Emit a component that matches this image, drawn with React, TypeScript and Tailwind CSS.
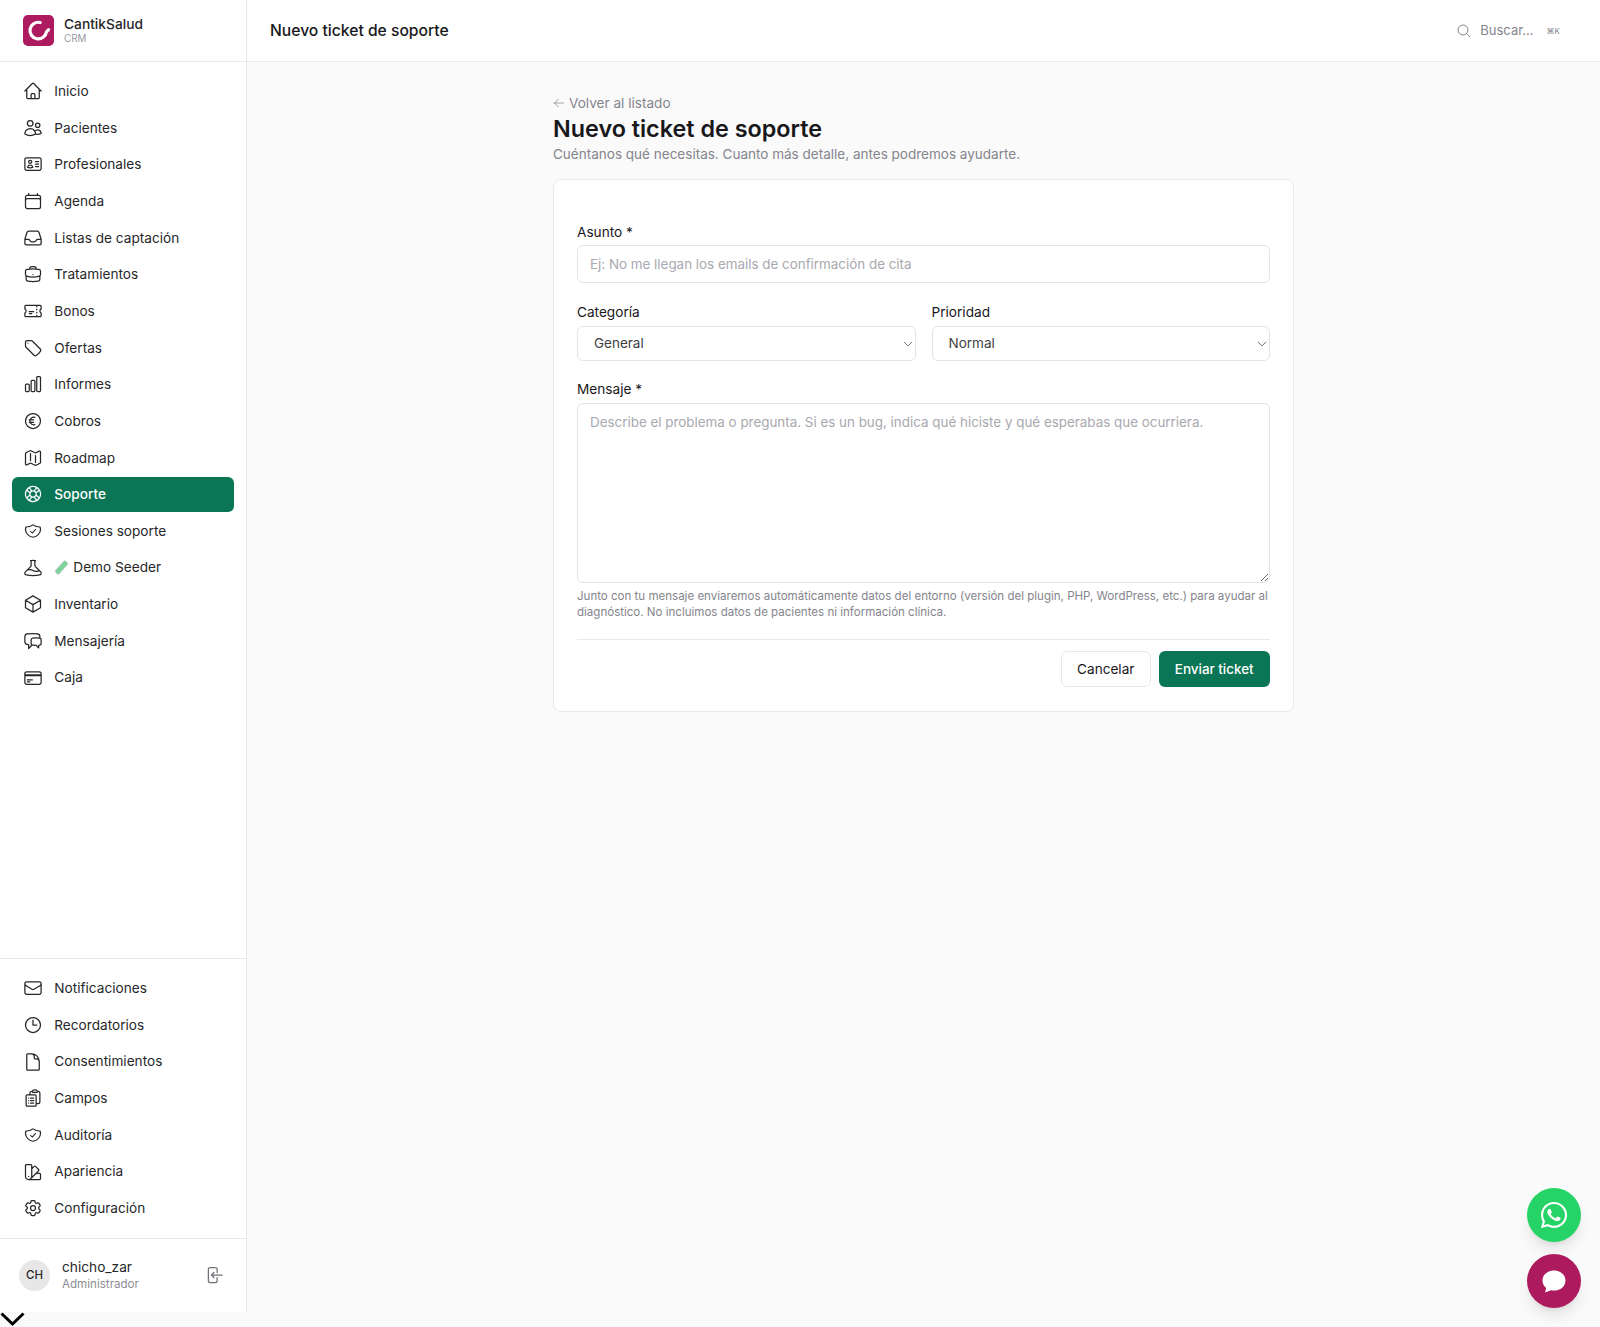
import React from "react";
import {
  HiOutlineHome, HiOutlineUsers, HiOutlineIdentification, HiOutlineCalendar, HiOutlineInbox,
  HiOutlineBriefcase, HiOutlineTicket, HiOutlineTag, HiOutlineChartBar, HiOutlineCurrencyEuro,
  HiOutlineMap, HiOutlineLifebuoy, HiOutlineShieldCheck, HiOutlineBeaker, HiOutlineCube,
  HiOutlineChatBubbleLeftRight, HiOutlineCreditCard, HiOutlineEnvelope, HiOutlineClock,
  HiOutlineDocument, HiOutlineClipboardDocumentList, HiOutlineSwatch, HiOutlineCog6Tooth,
  HiOutlineArrowLeftEndOnRectangle, HiOutlineMagnifyingGlass, HiOutlineArrowLeft, HiOutlineChevronDown,
} from "react-icons/hi2";
import { FaWhatsapp } from "react-icons/fa";

function TestTube() {
  return (
    <svg width="15" height="15" viewBox="0 0 15 15" className="mr-[4px]">
      <rect x="5" y="0" width="5" height="15" rx="1.6" transform="rotate(42 7.5 7.5)" fill="#7ed39c" stroke="#b9c6c0" strokeWidth="0.7" />
    </svg>
  );
}

const topNav: [any, string][] = [
  [HiOutlineHome, "Inicio"],
  [HiOutlineUsers, "Pacientes"],
  [HiOutlineIdentification, "Profesionales"],
  [HiOutlineCalendar, "Agenda"],
  [HiOutlineInbox, "Listas de captación"],
  [HiOutlineBriefcase, "Tratamientos"],
  [HiOutlineTicket, "Bonos"],
  [HiOutlineTag, "Ofertas"],
  [HiOutlineChartBar, "Informes"],
  [HiOutlineCurrencyEuro, "Cobros"],
  [HiOutlineMap, "Roadmap"],
  [HiOutlineLifebuoy, "Soporte"],
  [HiOutlineShieldCheck, "Sesiones soporte"],
  [HiOutlineBeaker, "Demo Seeder"],
  [HiOutlineCube, "Inventario"],
  [HiOutlineChatBubbleLeftRight, "Mensajería"],
  [HiOutlineCreditCard, "Caja"],
];

const bottomNav: [any, string][] = [
  [HiOutlineEnvelope, "Notificaciones"],
  [HiOutlineClock, "Recordatorios"],
  [HiOutlineDocument, "Consentimientos"],
  [HiOutlineClipboardDocumentList, "Campos"],
  [HiOutlineShieldCheck, "Auditoría"],
  [HiOutlineSwatch, "Apariencia"],
  [HiOutlineCog6Tooth, "Configuración"],
];

function NavItem({ icon: Icon, label }: { icon: any; label: string }) {
  const active = label === "Soporte";
  const squashed = Icon === HiOutlineShieldCheck;
  return (
    <a
      className={
        active
          ? "flex h-[34.33px] items-center gap-[11.3px] rounded-[6px] bg-[#0b7655] pl-[11px] text-[13.64px] font-medium text-white"
          : "flex h-[34.33px] items-center gap-[11.3px] rounded-[6px] pl-[11px] text-[13.64px] text-[#27272a]"
      }
    >
      {squashed ? (
        <Icon preserveAspectRatio="none" className="h-[16px] w-[20px] shrink-0" />
      ) : (
        <Icon className="h-[20px] w-[20px] shrink-0" />
      )}
      <span className="flex items-center">
        {label === "Demo Seeder" && <TestTube />}
        {label}
      </span>
    </a>
  );
}

function Field({ label, tight, children }: { label: string; tight?: boolean; children: React.ReactNode }) {
  return (
    <label className="block">
      <span className={tight ? "mb-[3px] block text-[13.63px] leading-[20px] text-[#18181b]" : "mb-[4px] block text-[13.63px] leading-[20px] text-[#18181b]"}>{label}</span>
      {children}
    </label>
  );
}

function SelectBox({ value }: { value: string }) {
  return (
    <div className="relative">
      <select
        defaultValue={value}
        className="h-[35.5px] w-full appearance-none rounded-[6px] border border-[#e4e4e7] bg-white pl-[16px] text-[13.5px] text-[#3f3f46] outline-none"
      >
        <option>{value}</option>
      </select>
      <HiOutlineChevronDown className="pointer-events-none absolute right-[2px] top-[12px] h-[12px] w-[12px] text-[#3f3f46]" />
    </div>
  );
}

export default function App() {
  return (
    <div className="relative h-[1327px] w-[1600px] overflow-hidden bg-[#fafafa] font-['Inter',sans-serif] text-[#18181b]">
      <div className="flex h-[1312px]">
        <aside className="flex w-[247px] shrink-0 flex-col border-r border-[#e9e9eb] bg-white">
          <div className="flex h-[62px] shrink-0 items-center gap-[10px] border-b border-[#e9e9eb] pl-[23px]">
            <svg width="31" height="31" viewBox="0 0 31 31">
              <rect width="31" height="31" rx="5" fill="#ae1a60" />
              <path d="M17.2 7.5A8.3 8.3 0 1 0 23.5 16.8L25.6 14.6" fill="none" stroke="#fff" strokeWidth="3.2" strokeLinecap="round" strokeLinejoin="round" />
            </svg>
            <div>
              <div className="text-[13.76px] font-medium leading-[17px] text-[#27272a]">CantikSalud</div>
              <div className="text-[9.8px] leading-[12px] text-[#9a9aa2]">CRM</div>
            </div>
          </div>
          <nav className="flex flex-col gap-[2.33px] px-[12px] pt-[12px]">
            {topNav.map(([icon, label]) => (
              <NavItem key={label} icon={icon} label={label} />
            ))}
          </nav>
          <div className="flex-1" />
          <nav className="flex flex-col gap-[2.33px] border-t border-[#e9e9eb] px-[12px] py-[12px]">
            {bottomNav.map(([icon, label]) => (
              <NavItem key={label} icon={icon} label={label} />
            ))}
          </nav>
          <div className="flex h-[74.5px] shrink-0 items-center border-t border-[#e9e9eb] pl-[19px]">
            <div className="flex h-[31px] w-[31px] items-center justify-center rounded-full bg-[#e7e7e7] text-[11.5px] font-medium text-[#27272a]">CH</div>
            <div className="ml-[12px] flex-1">
              <div className="text-[13.7px] leading-[18px] text-[#27272a]">chicho_zar</div>
              <div className="text-[11.6px] leading-[16px] text-[#8d8d95]">Administrador</div>
            </div>
            <HiOutlineArrowLeftEndOnRectangle className="mr-[22px] h-[20px] w-[20px] text-[#71717a]" />
          </div>
        </aside>
        <div className="flex min-w-0 flex-1 flex-col">
          <header className="flex h-[62px] shrink-0 items-center border-b border-[#e9e9eb] bg-white pl-[23px]">
            <h1 className="text-[15.67px] font-medium text-[#18181b]">Nuevo ticket de soporte</h1>
            <div className="ml-auto mr-[40px] flex items-center text-[#85858d]">
              <HiOutlineMagnifyingGlass className="h-[16px] w-[16px]" />
              <span className="ml-[8px] text-[13.05px]">Buscar...</span>
              <span className="ml-[13px] text-[8px]">⌘K</span>
            </div>
          </header>
          <main className="mx-auto w-[741px] pt-[32px]">
            <a className="flex items-center gap-[4px] text-[13.6px] leading-[18px] text-[#85858d]">
              <HiOutlineArrowLeft className="h-[12px] w-[12px]" />
              Volver al listado
            </a>
            <h2 className="mt-[1px] text-[23.35px] font-semibold leading-[31.5px] text-[#18181b]">Nuevo ticket de soporte</h2>
            <p className="text-[13.53px] leading-[18px] text-[#85858d]">Cuéntanos qué necesitas. Cuanto más detalle, antes podremos ayudarte.</p>
            <form className="mt-[16.5px] rounded-[8px] border border-[#e9e9eb] bg-white px-[23px] pb-[24px] pt-[42px]">
              <Field label="Asunto *" tight>
                <input
                  placeholder="Ej: No me llegan los emails de confirmación de cita"
                  className="h-[37.5px] w-full rounded-[6px] border border-[#e4e4e7] bg-white px-[12px] text-[13.4px] outline-none placeholder:text-[#a8a8af]"
                />
              </Field>
              <div className="mt-[19px] grid grid-cols-2 gap-[16px]">
                <Field label="Categoría"><SelectBox value="General" /></Field>
                <Field label="Prioridad"><SelectBox value="Normal" /></Field>
              </div>
              <div className="mt-[18px]">
                <Field label="Mensaje *">
                  <textarea
                    placeholder="Describe el problema o pregunta. Si es un bug, indica qué hiciste y qué esperabas que ocurriera."
                    className="block h-[180px] w-full rounded-[6px] border border-[#e4e4e7] bg-white px-[12px] py-[8px] text-[13.4px] leading-[20px] outline-none placeholder:text-[#a8a8af]"
                  />
                </Field>
              </div>
              <p className="mt-[6px] text-[11.54px] leading-[15.6px] text-[#85858d]">
                Junto con tu mensaje enviaremos automáticamente datos del entorno (versión del plugin, PHP, WordPress, etc.) para ayudar al diagnóstico. No incluimos datos de pacientes ni información clínica.
              </p>
              <div className="mt-[19px] flex justify-end gap-[8px] border-t border-[#e9e9eb] pt-[11px]">
                <button type="button" className="h-[36px] w-[89.5px] rounded-[6px] border border-[#e9e9eb] bg-white text-[13.6px] text-[#18181b]">Cancelar</button>
                <button type="button" className="h-[36px] w-[111.5px] rounded-[6px] bg-[#0b7655] text-[13.44px] font-medium text-white">Enviar ticket</button>
              </div>
            </form>
          </main>
        </div>
      </div>
      <svg width="26" height="16" viewBox="0 0 26 16" className="absolute left-0 top-[1311px]">
        <path d="M1.5 2.5l11 10.5 11-10.5" fill="none" stroke="#000" strokeWidth="3" />
      </svg>
      <button className="absolute left-[1527px] top-[1188px] flex h-[54px] w-[54px] items-center justify-center rounded-full bg-[#25d366] text-white shadow-lg">
        <FaWhatsapp className="h-[30px] w-[30px]" />
      </button>
      <button className="absolute left-[1527px] top-[1253.5px] flex h-[54px] w-[54px] items-center justify-center rounded-full bg-[#ae1a5e] text-white shadow-lg">
        <svg width="24" height="24" viewBox="0 0 24 24" fill="currentColor">
          <path d="M12 1.5C5.4 1.5 0.5 5.9 0.5 11.5c0 3 1.4 5.6 3.7 7.4L3 23.5l6-2.2c1 .2 2 .3 3 .3 6.6 0 11.5-4.5 11.5-10.1S18.6 1.5 12 1.5z" />
        </svg>
      </button>
    </div>
  );
}
